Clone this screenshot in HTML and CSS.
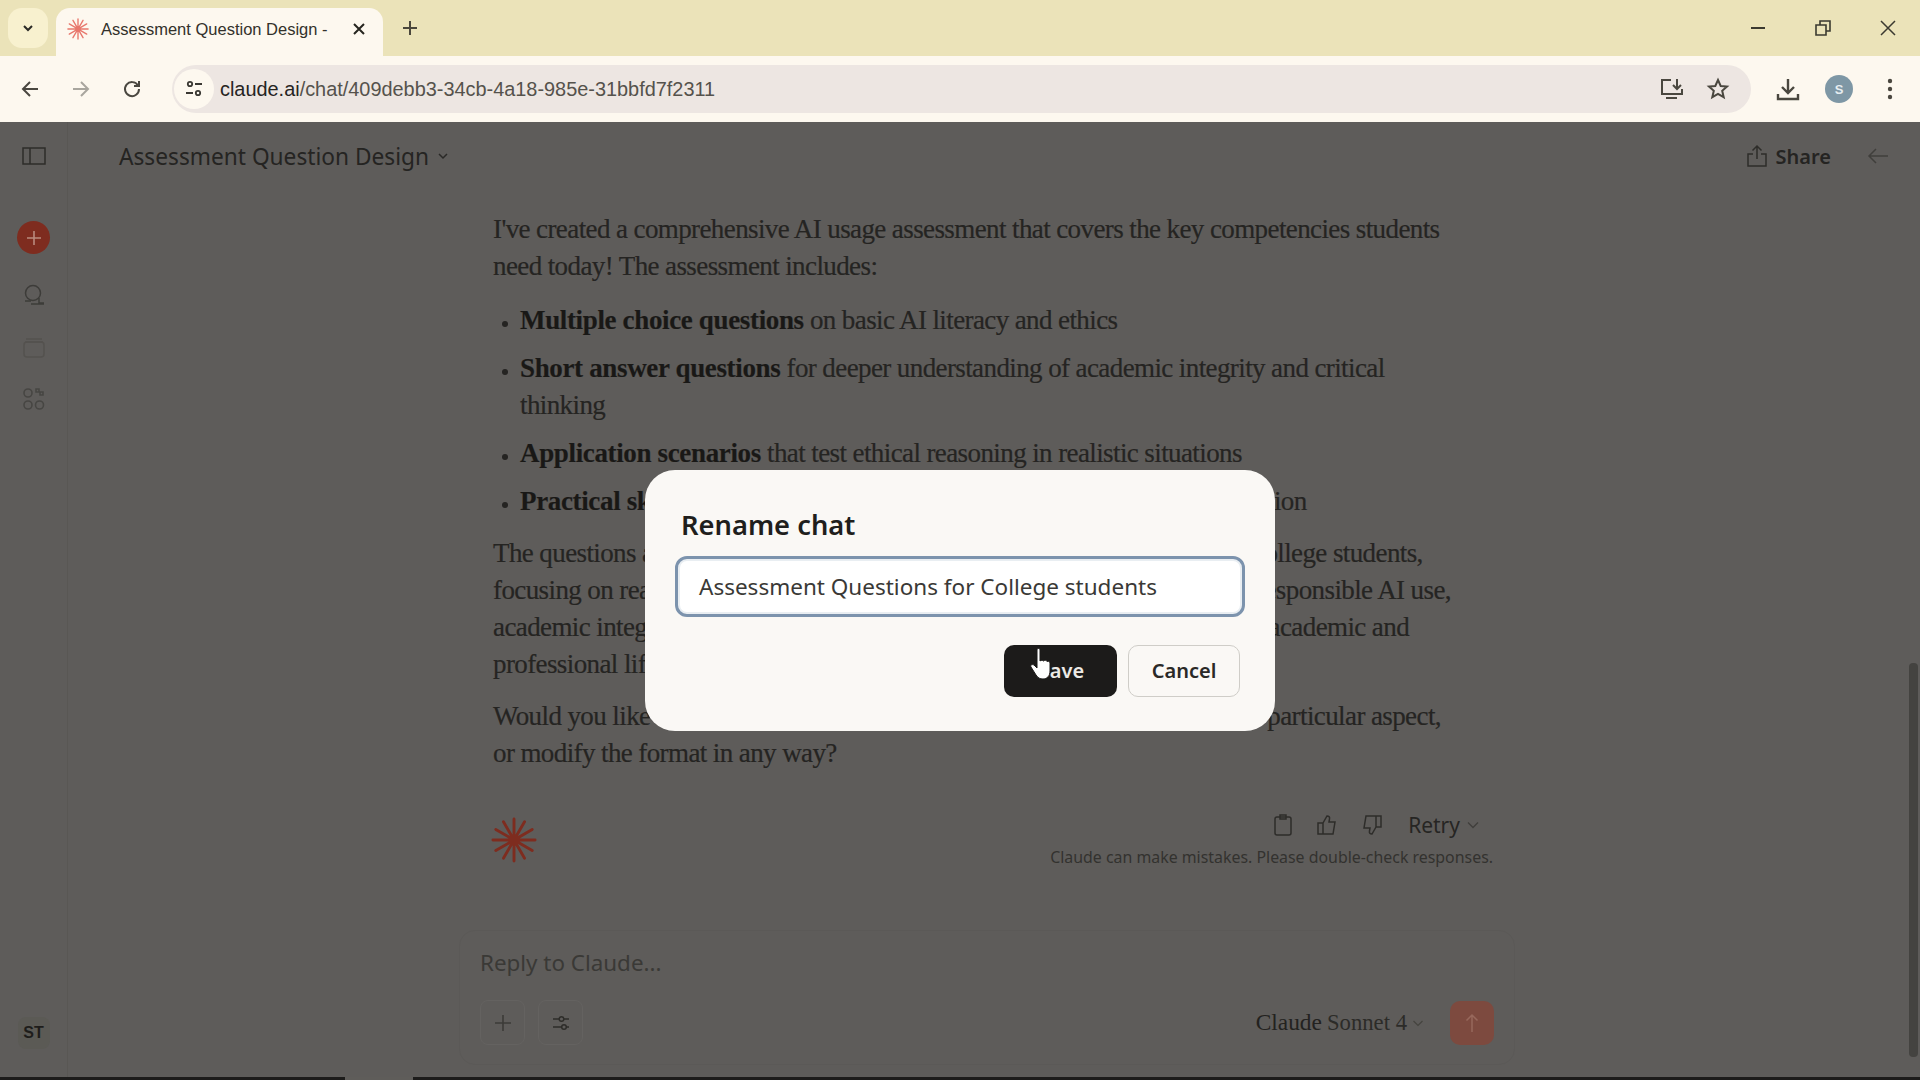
FILE: index.html
```html
<!DOCTYPE html>
<html lang="en">
<head>
  <meta charset="UTF-8" />
  <title>Assessment Question Design - Claude</title>
  <link rel="stylesheet" href="styles.css">
</head>
<body>
  <svg class="defs" width="0" height="0">
    <symbol id="spark" viewBox="0 0 48 48">
      <g stroke="currentColor" stroke-width="3" stroke-linecap="round">
        <path d="M24 2V46M2 24H46M13 5L35 43M5 13L43 35M35 5L13 43M43 13L5 35"/>
      </g>
    </symbol>
  </svg>

  <div class="tabstrip">
    <div class="tab-search">
      <svg width="14" height="14" viewBox="0 0 14 14"><path d="M3 5l4 4 4-4" fill="none" stroke="#2b2a26" stroke-width="2"/></svg>
    </div>
    <div class="tab">
      <svg class="favicon" width="22" height="22"><use href="#spark"/></svg>
      <span class="tab-title">Assessment Question Design -</span>
      <svg class="tab-close" width="14" height="14" viewBox="0 0 14 14"><path d="M2 2l10 10M12 2L2 12" stroke="#26251f" stroke-width="2"/></svg>
    </div>
    <svg class="new-tab" width="18" height="18" viewBox="0 0 18 18"><path d="M9 2v14M2 9h14" stroke="#4a473c" stroke-width="2"/></svg>
    <div class="win-controls">
      <svg width="18" height="18" viewBox="0 0 18 18"><path d="M2 9h14" stroke="#3b3a30" stroke-width="2"/></svg>
      <svg width="18" height="18" viewBox="0 0 18 18"><path d="M2 6h10v10H2zM6 6V2h10v10h-4" fill="none" stroke="#3b3a30" stroke-width="1.6"/></svg>
      <svg width="18" height="18" viewBox="0 0 18 18"><path d="M2 2l14 14M16 2L2 16" stroke="#3b3a30" stroke-width="1.5"/></svg>
    </div>
  </div>

  <div class="toolbar">
    <svg class="nav" width="20" height="20" viewBox="0 0 20 20"><path d="M18 10H3M10 3l-7 7 7 7" fill="none" stroke="#4a4740" stroke-width="2"/></svg>
    <svg class="nav" width="20" height="20" viewBox="0 0 20 20"><path d="M2 10h15M10 3l7 7-7 7" fill="none" stroke="#a9a69e" stroke-width="2"/></svg>
    <svg class="nav" width="20" height="20" viewBox="0 0 20 20"><path d="M16 6.5A7 7 0 1 0 17 10M17 2v5h-5" fill="none" stroke="#4a4740" stroke-width="2"/></svg>
    <div class="omnibox">
      <div class="site-info">
        <svg width="20" height="20" viewBox="0 0 20 20"><g fill="none" stroke="#3a3833" stroke-width="1.8"><circle cx="6" cy="5" r="2.2"/><path d="M11 5h7M2 14h7"/><circle cx="14" cy="14" r="2.2"/></g></svg>
      </div>
      <span class="url"><b>claude.ai</b>/chat/409debb3-34cb-4a18-985e-31bbfd7f2311</span>
      <div class="omni-icons">
        <svg width="24" height="24" viewBox="0 0 24 24"><g fill="none" stroke="#4a473f" stroke-width="2"><path d="M11 3H2v14h20v-5M6 21h11"/><path d="M17 2v9M13 8l4 4 4-4"/></g></svg>
        <svg width="24" height="24" viewBox="0 0 24 24"><path d="M12 3l2.7 6 6.3.6-4.8 4.2 1.5 6.4L12 16.8l-5.7 3.4 1.5-6.4L3 9.6 9.300 9z" fill="none" stroke="#4a473f" stroke-width="2"/></svg>
      </div>
    </div>
    <svg class="download" width="24" height="24" viewBox="0 0 24 24"><path d="M12 2v14M6 10l6 6 6-6M2 17v5h20v-5" fill="none" stroke="#4a473f" stroke-width="2.400"/></svg>
    <div class="profile">S</div>
    <svg class="menu" width="6" height="22" viewBox="0 0 6 22"><g fill="#4a473f"><circle cx="3" cy="3" r="2.200"/><circle cx="3" cy="11" r="2.200"/><circle cx="3" cy="19" r="2.200"/></g></svg>
  </div>

  <div class="app">
    <aside class="sidebar">
      <svg class="side-panel" width="24" height="18" viewBox="0 0 24 18"><path d="M1 1h22v16H1zM8 1v16" fill="none" stroke="#2e2d2a" stroke-width="1.500"/></svg>
      <div class="side-new">
        <svg width="14" height="14" viewBox="0 0 14 14"><path d="M7 0v14M0 7h14" stroke="#b98a7e" stroke-width="1.600"/></svg>
      </div>
      <svg class="side-icon chats" width="24" height="24" viewBox="0 0 24 24"><g fill="none" stroke="#3d3c39" stroke-width="1.500"><circle cx="11" cy="10" r="7.500"/><path d="M3 18h6M17 15v5h5M9 21h13"/></g></svg>
      <svg class="side-icon projects" width="24" height="22" viewBox="0 0 24 22"><g fill="none" stroke="#54524f" stroke-width="1.500"><rect x="2" y="6" width="20" height="15" rx="3"/><path d="M4 3h16M3 6h18"/></g></svg>
      <svg class="side-icon artifacts" width="24" height="24" viewBox="0 0 24 24"><g fill="none" stroke="#474643" stroke-width="1.600"><circle cx="6" cy="6" r="4"/><path d="M14 2h3v3h-3zM18 5h3v3h-3z"/><circle cx="6" cy="18" r="4"/><circle cx="17.500" cy="18" r="4"/></g></svg>
      <div class="side-user">ST</div>
    </aside>

    <main class="main">
      <header class="chat-header">
        <div class="chat-title">Assessment Question Design
          <svg width="12" height="12" viewBox="0 0 12 12"><path d="M2 4l4 4 4-4" fill="none" stroke="#2a2927" stroke-width="1.500"/></svg>
        </div>
        <div class="share">
          <svg width="20" height="24" viewBox="0 0 20 24"><path d="M10 15V2M5.500 6.500L10 2l4.500 4.500M6 10H1v12h18V10h-5" fill="none" stroke="#2e2d2a" stroke-width="1.500"/></svg>
          <span>Share</span>
        </div>
        <svg class="back-arrow" width="22" height="16" viewBox="0 0 22 16"><path d="M21 8H2M9 1L2 8l7 7" fill="none" stroke="#403f3c" stroke-width="1.500"/></svg>
      </header>

      <article class="message">
        <p>I've created a comprehensive AI usage assessment that covers the key competencies students<br>need today! The assessment includes:</p>
        <ul>
          <li><strong>Multiple choice questions</strong> on basic AI literacy and ethics</li>
          <li><strong>Short answer questions</strong> for deeper understanding of academic integrity and critical<br>thinking</li>
          <li><strong>Application scenarios</strong> that test ethical reasoning in realistic situations</li>
          <li><strong>Practical skills assessment</strong> covering prompt writing and output verification</li>
        </ul>
        <p>The questions are designed to be thought-provoking while appropriate for college students,<br>focusing on real-world applications rather than hypothetical knowledge of responsible AI use,<br>academic integrity, and the practical skills they will need to succeed in both academic and<br>professional life.</p>
        <p>Would you like me to adjust the difficulty level, add more questions on one particular aspect,<br>or modify the format in any way?</p>
        <div class="message-foot">
          <svg class="claude-mark" width="46" height="46"><use href="#spark"/></svg>
          <div class="foot-right">
            <div class="actions">
              <svg width="20" height="22" viewBox="0 0 20 22"><g fill="none" stroke="#2e2d2a" stroke-width="1.500"><rect x="2" y="3" width="16" height="18" rx="2"/><path d="M7 1h6v4H7z"/></g></svg>
              <svg width="22" height="22" viewBox="0 0 22 22"><path d="M7 9l4-7c2 0 3 1 2.500 3L13 8h6l-2 12H7zM7 9H2v11h5" fill="none" stroke="#2e2d2a" stroke-width="1.500"/></svg>
              <svg width="22" height="22" viewBox="0 0 22 22"><path d="M15 13l-4 7c-2 0-3-1-2.500-3L9 14H3L5 2h10zM15 13h5V2h-5" fill="none" stroke="#2e2d2a" stroke-width="1.500"/></svg>
              <span class="retry">Retry</span>
              <svg width="14" height="14" viewBox="0 0 14 14"><path d="M2 4.500l5 5 5-5" fill="none" stroke="#403f3c" stroke-width="1.300"/></svg>
            </div>
            <div class="disclaimer">Claude can make mistakes. Please double-check responses.</div>
          </div>
        </div>
      </article>

      <section class="composer">
        <div class="reply">Reply to Claude...</div>
        <div class="composer-row">
          <div class="tool-btn"><svg width="18" height="18" viewBox="0 0 18 18"><path d="M9 1v16M1 9h16" stroke="#3c3b38" stroke-width="1.600"/></svg></div>
          <div class="tool-btn"><svg width="20" height="20" viewBox="0 0 20 20"><g fill="none" stroke="#2e2d2a" stroke-width="1.500"><path d="M2 6h6M13 6h5M2 14h9M15 14h3"/><circle cx="10.500" cy="6" r="2.300"/><circle cx="13" cy="14" r="2.300"/></g></svg></div>
          <div class="model"><span class="model-a">Claude</span> <span class="model-b">Sonnet 4</span>
            <svg width="12" height="12" viewBox="0 0 12 12"><path d="M1.500 4l4.500 4.500L10.500 4" fill="none" stroke="#45443f" stroke-width="1.200"/></svg>
          </div>
          <div class="send"><svg width="14" height="20" viewBox="0 0 14 20"><path d="M7 19V2M1.500 7.500L7 2l5.500 5.500" fill="none" stroke="#97685c" stroke-width="1.500"/></svg></div>
        </div>
      </section>
    </main>

    <div class="scrollbar"></div>

    <div class="modal">
      <h2>Rename chat</h2>
      <div class="rename-input">Assessment Questions for College students</div>
      <div class="modal-buttons">
        <div class="btn btn-save">Save</div>
        <div class="btn btn-cancel">Cancel</div>
      </div>
      <svg class="cursor" width="26" height="36" viewBox="0 0 26 36"><path d="M7 3c0-2 3-2 3 0v11c1-1 3-1 3.500 0 1-1 3-1 3.500.5 1-.5 3-.5 3 1.500v8c0 5-3 8-7 8-3 0-5-1-7-4l-5-8c-1-2 1-3 3-2l3 3z" fill="#fff" stroke="#1b1a19" stroke-width="1"/></svg>
    </div>
  </div>

  <div class="video-bar"><div class="video-seg"></div></div>
</body>
</html>
```

FILE: styles.css
```css
* {
  box-sizing: border-box;
  margin: 0;
  padding: 0;
}

html, body {
  width: 1920px;
  height: 1080px;
  overflow: hidden;
}

body {
  display: flex;
  flex-direction: column;
  background: #5e5c5a;
  font-family: 'Liberation Sans', Arial, sans-serif;
}

.defs {
  position: absolute;
}

/* browser chrome */
.tabstrip {
  height: 56px;
  display: flex;
  align-items: flex-end;
  background: #ebe3b9;
  flex-shrink: 0;
}

.tab-search {
  width: 40px;
  height: 40px;
  margin: 0 8px 8px;
  border-radius: 14px;
  background: #f8f1cf;
  display: flex;
  align-items: center;
  justify-content: center;
}

.tab {
  width: 327px;
  height: 48px;
  background: #fdf8ef;
  border-radius: 14px 14px 0 0;
  display: flex;
  align-items: center;
  padding: 0 0 6px 11px;
}

.favicon {
  color: #e8776c;
  flex-shrink: 0;
}

.tab-title {
  width: 225px;
  margin-left: 12px;
  font-size: 16.5px;
  color: #33312b;
  white-space: nowrap;
}

.tab-close {
  margin-left: 26px;
}

.new-tab {
  margin: 0 0 19px 18px;
}

.win-controls {
  margin: 0 23px 19px auto;
  display: flex;
  gap: 47px;
}

.toolbar {
  height: 66px;
  display: flex;
  align-items: center;
  background: #fdf8ef;
  flex-shrink: 0;
}

.nav {
  margin-left: 20px;
  margin-right: 11px;
}

.omnibox {
  width: 1579px;
  height: 48px;
  margin-left: 19px;
  margin-right: 35px;
  border-radius: 24px;
  background: #ede6e2;
  display: flex;
  align-items: center;
}

.site-info {
  width: 40px;
  height: 40px;
  margin-left: 2px;
  border-radius: 50%;
  background: #fdf8ef;
  display: flex;
  align-items: center;
  justify-content: center;
}

.url {
  margin-left: 6px;
  font-size: 19.9px;
  color: #55524c;
  white-space: nowrap;
}

.url b {
  font-weight: normal;
  color: #26241f;
}

.omni-icons {
  margin-left: auto;
  margin-right: 21px;
  display: flex;
  gap: 22px;
}

.download {
  margin-left: -10px;
}

.profile {
  width: 28px;
  height: 28px;
  margin-left: 25px;
  border-radius: 50%;
  background: #7e97a5;
  color: #e6edf0;
  font-size: 13px;
  font-weight: bold;
  display: flex;
  align-items: center;
  justify-content: center;
}

.menu {
  margin-left: 34px;
}

/* claude app, dimmed by the dialog */
.app {
  position: relative;
  flex: 1;
  display: flex;
  min-height: 0;
}

.sidebar {
  width: 68px;
  flex-shrink: 0;
  display: flex;
  flex-direction: column;
  align-items: center;
  border-right: 1px solid #595754;
  padding-top: 25px;
}

.side-new {
  width: 33px;
  height: 33px;
  margin-top: 56px;
  border-radius: 50%;
  background: #7e2c1f;
  display: flex;
  align-items: center;
  justify-content: center;
}

.side-icon {
  display: block;
}

.chats {
  margin-top: 29px;
}

.projects {
  margin-top: 29px;
}

.artifacts {
  margin-top: 29px;
}

.side-user {
  width: 32px;
  height: 32px;
  margin-top: auto;
  margin-bottom: 28px;
  border-radius: 8px;
  background: #5b5a55;
  color: #1e1d1b;
  font-size: 16px;
  font-weight: bold;
  display: flex;
  align-items: center;
  justify-content: center;
}

.main {
  flex: 1;
  display: flex;
  flex-direction: column;
  min-width: 0;
}

.chat-header {
  height: 70px;
  flex-shrink: 0;
  display: flex;
  align-items: center;
  padding: 0 31px 2px 51px;
  color: #252422;
}

.chat-title {
  font-family: 'Noto Sans', sans-serif;
  font-size: 22.7px;
  display: flex;
  align-items: center;
  gap: 8px;
}

.share {
  margin-left: auto;
  display: flex;
  align-items: center;
  gap: 9px;
  font-family: 'Noto Sans', sans-serif;
  font-size: 20px;
  font-weight: 600;
}

.back-arrow {
  margin-left: 36px;
}

.message {
  width: 1000px;
  margin-left: 425px;
  padding-top: 19px;
  font-family: 'Liberation Serif', serif;
  font-size: 27px;
  letter-spacing: -0.6px;
  line-height: 37px;
  color: #252422;
  -webkit-text-stroke: 0.2px #252422;
  white-space: nowrap;
}

.message p {
  margin-bottom: 15px;
}

.message ul {
  list-style: disc;
  padding-left: 27px;
  margin: 17px 0 15px;
}

.message li {
  margin-bottom: 11px;
}

.message li::marker {
  font-size: 19px;
}

.message li:last-child {
  margin-bottom: 0;
}

.message strong {
  color: #191816;
  letter-spacing: -0.35px;
}

.message-foot {
  display: flex;
  justify-content: space-between;
  margin-top: 45px;
  -webkit-text-stroke: 0;
}

.claude-mark {
  color: #7e2c1f;
  margin-left: -2px;
}

.foot-right {
  display: flex;
  flex-direction: column;
  align-items: flex-end;
  margin-top: -8px;
}

.actions {
  display: flex;
  align-items: center;
  gap: 23px;
  margin-right: 13px;
  height: 32px;
}

.retry {
  font-family: 'Noto Sans', sans-serif;
  font-size: 21px;
  letter-spacing: 0;
  color: #262523;
  margin-left: 2px;
  margin-right: -17px;
}

.disclaimer {
  font-family: 'Noto Sans', sans-serif;
  font-size: 15.9px;
  letter-spacing: 0;
  line-height: 20px;
  margin-top: 6px;
  color: #33322f;
}

.composer {
  width: 1056px;
  margin: auto 0 12px 391px;
  height: 135px;
  flex-shrink: 0;
  border: 1px solid #5b5957;
  border-radius: 16px;
  padding: 14px 20px 0;
}

.reply {
  font-family: 'Noto Sans', sans-serif;
  font-size: 22.4px;
  line-height: 36px;
  color: #3a3936;
}

.composer-row {
  display: flex;
  align-items: center;
  gap: 13px;
  margin-top: 19px;
}

.tool-btn {
  width: 45px;
  height: 45px;
  border: 1px solid #646260;
  border-radius: 8px;
  display: flex;
  align-items: center;
  justify-content: center;
}

.model {
  margin-left: auto;
  display: flex;
  align-items: center;
  gap: 5px;
  font-family: 'Liberation Serif', serif;
  color: #232220;
}

.model-a {
  font-size: 23.4px;
}

.model-b {
  font-size: 22.7px;
  color: #2c2b28;
}

.send {
  width: 44px;
  height: 44px;
  margin-left: 13px;
  border-radius: 10px;
  background: #7d4a3f;
  display: flex;
  align-items: center;
  justify-content: center;
}

.scrollbar {
  position: absolute;
  right: 2px;
  top: 541px;
  width: 9px;
  height: 394px;
  border-radius: 4px;
  background: #444340;
}

/* rename dialog */
.modal {
  position: absolute;
  left: 645px;
  top: 348px;
  width: 630px;
  height: 261px;
  border-radius: 30px;
  background: #faf8f5;
  padding: 35px 30px 0;
  font-family: 'Noto Sans', sans-serif;
  color: #1f1e1c;
}

.modal h2 {
  font-size: 27.3px;
  font-weight: 600;
  line-height: 40px;
  margin-left: 6px;
}

.rename-input {
  height: 61px;
  margin-top: 11px;
  border: 3px solid #7c93ad;
  border-radius: 12px;
  background: #fff;
  box-shadow: inset 0 0 0 2px #e9eef2;
  padding-left: 21px;
  font-size: 22.5px;
  line-height: 55px;
  color: #3a3936;
  white-space: nowrap;
}

.modal-buttons {
  display: flex;
  justify-content: flex-end;
  gap: 11px;
  margin: 28px 5px 0 0;
}

.btn {
  height: 52px;
  border-radius: 10px;
  display: flex;
  align-items: center;
  justify-content: center;
  font-size: 20px;
  font-weight: 600;
  padding-bottom: 2px;
}

.btn-save {
  width: 113px;
  background: #1c1b1a;
  color: #eceae6;
  padding-left: 2px;
}

.btn-cancel {
  width: 112px;
  border: 1px solid #cfcdc8;
  color: #2a2927;
}

.cursor {
  position: absolute;
  left: 385px;
  top: 177px;
}

.video-bar {
  height: 3px;
  flex-shrink: 0;
  background: #1d1c1b;
  padding-left: 345px;
}

.video-seg {
  width: 68px;
  height: 3px;
  background: #5f5d5a;
}
```
